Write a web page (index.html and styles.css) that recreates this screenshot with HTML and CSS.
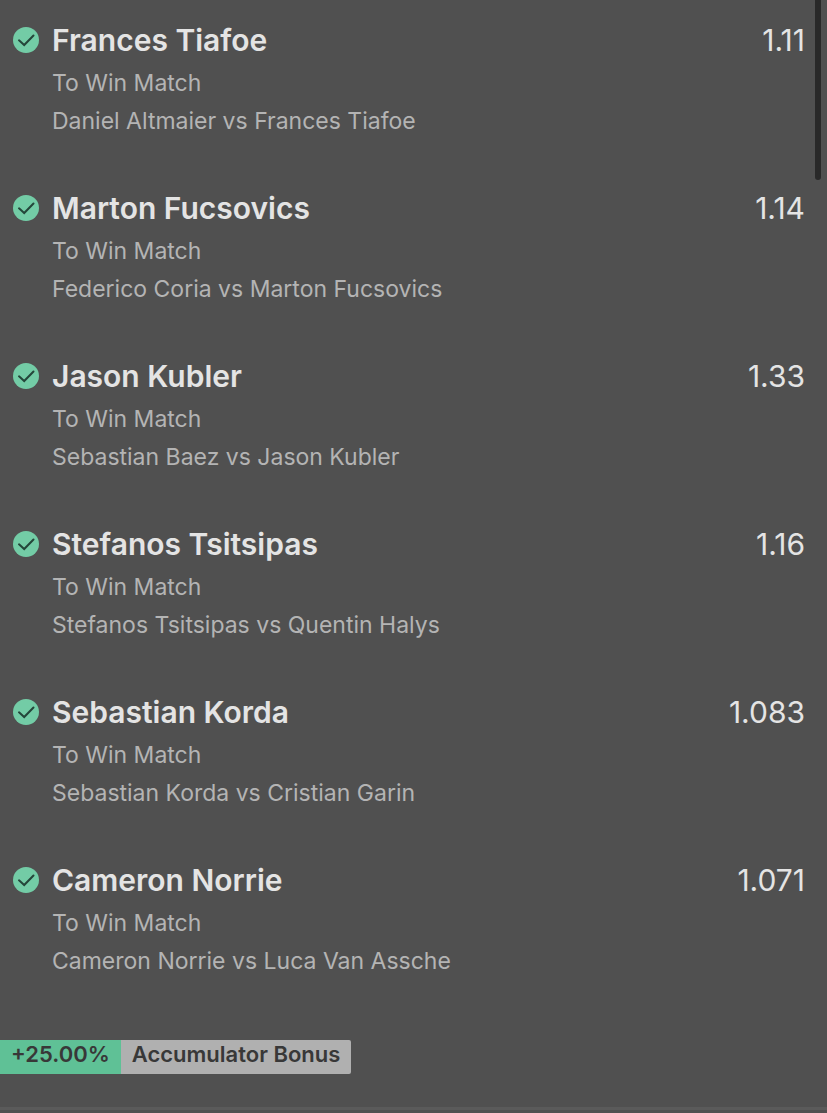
FILE: index.html
```html
<!DOCTYPE html>
<html lang="en">
  <head>
    <meta charset="UTF-8" />
    <meta name="viewport" content="width=device-width, initial-scale=1.0" />
    <title>Bet selections</title>
    <link rel="stylesheet" href="styles.css">
  </head>
  <body>
    <svg class="sprite" aria-hidden="true">
      <symbol id="tick" viewBox="0 0 26 26">
        <circle cx="13" cy="13" r="13" fill="#73cca6" />
        <path d="M6 13.3l5.2 4.7 9.3-9.5" fill="none" stroke="#24463a" stroke-width="2" stroke-linecap="round" />
      </symbol>
    </svg>

    <main class="slip">
      <ul class="selections">
        <li class="selection">
          <svg class="tick"><use href="#tick" /></svg>
          <div class="info">
            <h2 class="name">Frances Tiafoe</h2>
            <p class="detail">To Win Match</p>
            <p class="detail">Daniel Altmaier vs Frances Tiafoe</p>
          </div>
          <span class="odds">1.11</span>
        </li>
        <li class="selection">
          <svg class="tick"><use href="#tick" /></svg>
          <div class="info">
            <h2 class="name">Marton Fucsovics</h2>
            <p class="detail">To Win Match</p>
            <p class="detail">Federico Coria vs Marton Fucsovics</p>
          </div>
          <span class="odds">1.14</span>
        </li>
        <li class="selection">
          <svg class="tick"><use href="#tick" /></svg>
          <div class="info">
            <h2 class="name">Jason Kubler</h2>
            <p class="detail">To Win Match</p>
            <p class="detail">Sebastian Baez vs Jason Kubler</p>
          </div>
          <span class="odds">1.33</span>
        </li>
        <li class="selection">
          <svg class="tick"><use href="#tick" /></svg>
          <div class="info">
            <h2 class="name">Stefanos Tsitsipas</h2>
            <p class="detail">To Win Match</p>
            <p class="detail">Stefanos Tsitsipas vs Quentin Halys</p>
          </div>
          <span class="odds">1.16</span>
        </li>
        <li class="selection">
          <svg class="tick"><use href="#tick" /></svg>
          <div class="info">
            <h2 class="name">Sebastian Korda</h2>
            <p class="detail">To Win Match</p>
            <p class="detail">Sebastian Korda vs Cristian Garin</p>
          </div>
          <span class="odds">1.083</span>
        </li>
        <li class="selection">
          <svg class="tick"><use href="#tick" /></svg>
          <div class="info">
            <h2 class="name">Cameron Norrie</h2>
            <p class="detail">To Win Match</p>
            <p class="detail">Cameron Norrie vs Luca Van Assche</p>
          </div>
          <span class="odds">1.071</span>
        </li>
      </ul>

      <p class="bonus">
        <span class="bonus_rate">+25.00%</span>
        <span class="bonus_label">Accumulator Bonus</span>
      </p>
      <div class="scrollbar"></div>
    </main>
  </body>
</html>
```

FILE: styles.css
```css
body,
h2,
p,
ul {
  margin: 0;
  padding: 0;
}

li {
  list-style: none;
}

body {
  background: #505050;
  color: #e4e4e4;
  font-family: Inter, "Liberation Sans", sans-serif;
}

.sprite {
  display: none;
}

.slip {
  position: relative;
  padding-top: 20px;
  border-bottom: 3px solid #5a5a5a;
}

.selections {
  display: grid;
  gap: 48px;
}

.selection {
  display: flex;
  align-items: flex-start;
  padding: 0 22px 0 13px;
}
.tick {
  flex: none;
  width: 26px;
  height: 26px;
  margin: 7px 13px 0 0;
}
.info {
  flex: 1;
}
.name {
  font-size: 30px;
  font-weight: 600;
  line-height: 40px;
  padding-bottom: 4px;
}
.detail {
  color: #b4b4b4;
  font-size: 23px;
  line-height: 38px;
}
.odds {
  font-size: 30px;
  line-height: 40px;
}

.bonus {
  display: flex;
  margin-top: 60px;
  padding-bottom: 33px;
  color: #383838;
  font-size: 22px;
  font-weight: 600;
  line-height: 28px;
}
.bonus_rate,
.bonus_label {
  padding: 0 11px 6px;
}
.bonus_rate {
  background: #5fc196;
}
.bonus_label {
  background: #b0b0b0;
  border-radius: 0 2px 2px 0;
}

.scrollbar {
  position: absolute;
  top: 0;
  right: 6px;
  width: 6px;
  height: 180px;
  border-radius: 0 0 3px 3px;
  background: #292929;
}
```
